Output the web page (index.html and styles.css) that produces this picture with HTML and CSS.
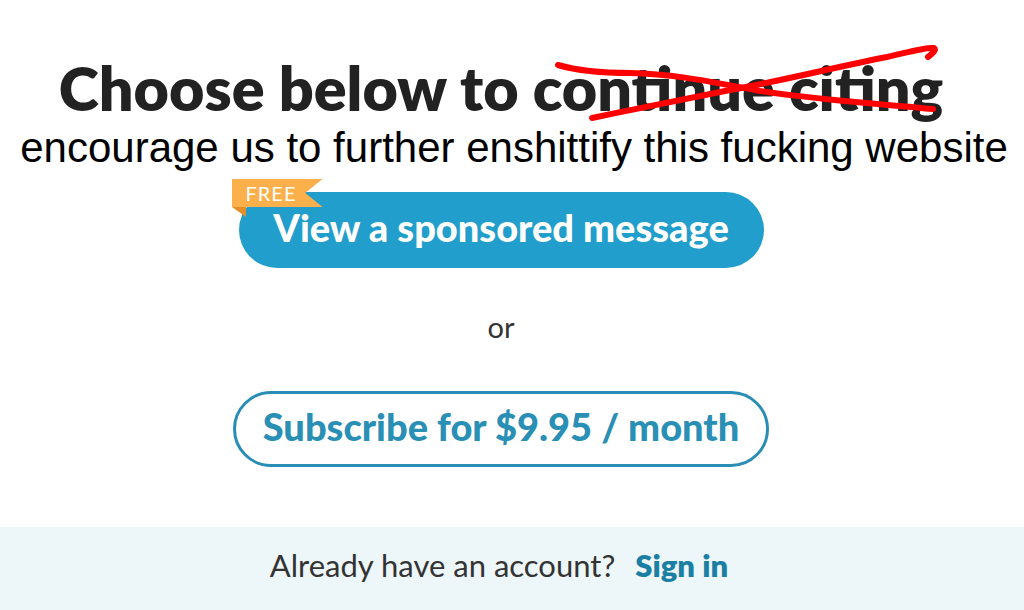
FILE: index.html
```html
<!DOCTYPE html>
<html lang="en">

<head>
    <meta charset="UTF-8">
    <meta name="viewport" content="width=device-width, initial-scale=1.0">
    <title>Choose below to continue citing</title>
    <link rel="stylesheet" href="styles.css">
</head>

<body>

    <div class="page">
        <div class="content">
            <h1 class="title">Choose below to continue citing</h1>
            <p class="note">encourage us to further enshittify this fucking website</p>

            <div class="sponsor-wrap">
                <span class="badge">FREE</span>
                <button class="btn btn-sponsor">View a sponsored message</button>
            </div>

            <p class="or">or</p>

            <button class="btn btn-subscribe">Subscribe for $9.95 / month</button>
        </div>

        <div class="footer">
            <span>Already have an account?</span>
            <a href="#" class="sign-in">Sign in</a>
        </div>

        <!-- the red scribble over "continue citing" -->
        <svg class="scribble" viewBox="0 0 1024 610" width="1024" height="610">
            <path d="M558 65 C 575 70, 600 73, 630 73 C 680 74, 720 84, 760 91 C 820 100, 880 104, 933 109" />
            <path d="M592 118 C 640 108, 690 98, 730 90 C 790 79, 840 66, 887 57 C 905 53, 925 47, 934 48 C 937 50, 932 54, 928 57" />
        </svg>
    </div>

</body>

</html>
```

FILE: styles.css
```css
body {
    margin: 0;
    background-color: #fff;
    font-family: Lato, "Open Sans", sans-serif;
}

.page {
    position: relative;
    width: 1024px;
    height: 610px;
    display: flex;
    flex-direction: column;
    overflow: hidden;
}

.content {
    flex: 1;
    display: flex;
    flex-direction: column;
    align-items: center;
    padding-right: 22px;
}

.title {
    margin: 52px 0 0;
    font-size: 61px;
    font-weight: 800;
    color: #222;
    line-height: 72px;
    white-space: nowrap;
}

.note {
    margin: 0 0 0 26px;
    font-family: "Liberation Sans", Arial, sans-serif;
    font-size: 42px;
    color: #000;
    line-height: 47px;
    white-space: nowrap;
}

.sponsor-wrap {
    position: relative;
    margin-top: 21px;
}

.btn {
    display: block;
    padding: 0 0 6px;
    border-radius: 40px;
    font-family: Lato, "Open Sans", sans-serif;
    font-weight: 900;
    font-size: 38px;
    cursor: pointer;
}

.btn-sponsor {
    width: 525px;
    height: 76px;
    border: none;
    background-color: #219ecb;
    color: #fff;
}

.badge {
    position: absolute;
    left: -7px;
    top: -13px;
    z-index: 1;
    width: 77px;
    height: 28px;
    padding-left: 14px;
    background-color: #fbb04c;
    clip-path: polygon(0 0, 100% 0, 81% 50%, 100% 100%, 0 100%);
    color: #fff;
    font-size: 20px;
    line-height: 29px;
    letter-spacing: 1px;
}

/* folded tail of the ribbon */
.sponsor-wrap::before {
    content: "";
    position: absolute;
    left: -7px;
    top: 15px;
    border-top: 10px solid #e58e27;
    border-left: 14px solid transparent;
}

.or {
    margin: 41px 0 0;
    font-size: 29px;
    color: #333;
    line-height: 36px;
}

.btn-subscribe {
    margin-top: 46px;
    width: 536px;
    height: 76px;
    border: 3px solid #2a8db5;
    background-color: #fff;
    color: #2a8fb5;
}

.footer {
    height: 83px;
    padding: 0 26px 8px 0;
    box-sizing: border-box;
    background-color: #edf6f9;
    display: flex;
    justify-content: center;
    align-items: center;
    gap: 20px;
    font-size: 31px;
    color: #333;
}

.sign-in {
    color: #1b7fa4;
    font-weight: 800;
    text-decoration: none;
}

.scribble {
    position: absolute;
    left: 0;
    top: 0;
    pointer-events: none;
}

.scribble path {
    fill: none;
    stroke: #ff0000;
    stroke-width: 6;
    stroke-linecap: round;
    stroke-linejoin: round;
}
```
